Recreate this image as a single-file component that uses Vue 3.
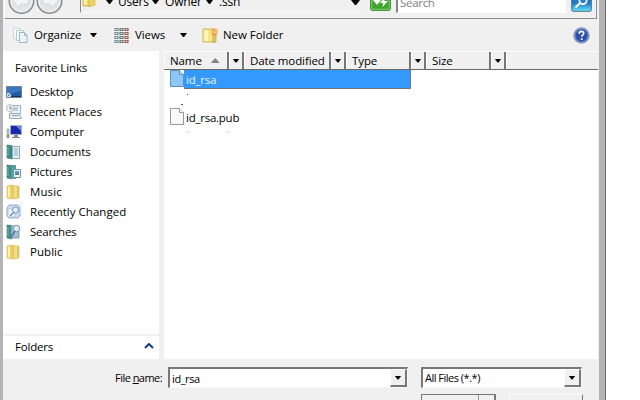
<script setup>
const links = [
  { name: 'Desktop', icon: 'desktop', track: -0.15 },
  { name: 'Recent Places', icon: 'recent', track: -0.12 },
  { name: 'Computer', icon: 'computer', track: 0 },
  { name: 'Documents', icon: 'documents', track: -0.1 },
  { name: 'Pictures', icon: 'pictures', track: -0.1 },
  { name: 'Music', icon: 'folder', track: 0.1 },
  { name: 'Recently Changed', icon: 'changed', track: 0.03 },
  { name: 'Searches', icon: 'searches', track: -0.25 },
  { name: 'Public', icon: 'folder', track: 0.05 },
]
const columns = [
  { name: 'Name', width: 65, sorted: true },
  { name: 'Date modified', width: 87 },
  { name: 'Type', width: 65 },
  { name: 'Size', width: 65 },
]
</script>

<template>
  <div class="screen">
    <div class="window">
      <header class="address">
        <div class="nav">
          <svg v-for="d in ['back', 'forward']" :key="d" width="27" height="28" viewBox="0 0 27 28">
            <circle cx="13.5" cy="14" r="12.3" fill="#d0d1d2" stroke="#8a8c8e" stroke-width="1.4" />
            <circle cx="13.5" cy="14" r="10.6" fill="#e2e3e4" stroke="#f8f8f8" />
            <path :d="d === 'back' ? 'M5 14l7-7v4h8v6h-8v4z' : 'M22 14l-7-7v4H7v6h8v4z'" fill="#f5f5f5" stroke="#d2d4d6" stroke-width=".8" />
          </svg>
        </div>
        <div class="path">
          <svg class="path-icon" width="14" height="16" viewBox="0 0 14 16">
            <path d="M1 1h8v13H1z" fill="#edd568" stroke="#c3a53d" stroke-width=".6" />
            <path d="M7 3h6v10l-6 2z" fill="#ecd45c" stroke="#c9ad46" stroke-width=".6" />
            <path d="M2 2h3v11H2z" fill="#fbf1ad" />
          </svg>
          <i class="tri t1"></i><span class="crumb c1">Users</span>
          <i class="tri t2"></i><span class="crumb c2">Owner</span>
          <i class="tri t3"></i><span class="crumb c3">.ssh</span>
          <i class="tri t4"></i>
        </div>
        <svg class="refresh" width="21" height="20" viewBox="0 0 21 20">
          <rect x=".7" y=".7" width="19.6" height="18.6" rx="1.5" fill="#3fa52c" stroke="#2e7f24" />
          <rect x="1.8" y="1.8" width="17.4" height="16.4" fill="none" stroke="#93d781" stroke-width=".8" />
          <path d="M3 9h2V6h4v3h2l-4 5zM10 12l4-6 .5 4h3.500l-5.500 6 .5-4z" fill="#fff" />
        </svg>
        <div class="search">Search</div>
        <svg class="go" width="21" height="20" viewBox="0 0 21 20">
          <defs><linearGradient id="goFill" x2="0" y2="1"><stop stop-color="#1555ac" /><stop offset=".6" stop-color="#2583cd" /><stop offset="1" stop-color="#68e5f4" /></linearGradient></defs>
          <rect x=".7" y=".7" width="19.6" height="18.6" rx="1.5" fill="url(#goFill)" stroke="#4b6f8c" />
          <circle cx="12" cy="8.5" r="3.6" fill="#2b7cca" stroke="#fff" stroke-width="1.8" />
          <path d="M9 11l-4.5 4.5" stroke="#fff" stroke-width="2" />
        </svg>
      </header>

      <nav class="toolbar">
        <svg class="i-org" width="15" height="17" viewBox="0 0 15 17">
          <path d="M.5 1.5h7v10h-7z" fill="#f7fafc" stroke="#c8d8e2" />
          <path d="M3.5 3.5h7v10h-7z" fill="#f7fafc" stroke="#b6cad8" />
          <path d="M6.500 5.500h5l2.500 2.500v7.500h-7.500z" fill="#eef5fa" stroke="#9bb5c8" />
          <path d="M11.500 5.500v3H14" fill="none" stroke="#9bb5c8" />
        </svg>
        <span class="w-org">Organize</span><i class="tri a-org"></i>
        <svg class="i-view" width="15" height="15" viewBox="0 0 15 15">
          <g v-for="r in 4" :key="r">
            <g v-for="c in 3" :key="c">
              <rect :x="(c - 1) * 5 + .5" :y="(r - 1) * 4" width="4" height="3" :fill="c === 3 ? '#8a4444' : c === 2 ? '#46665a' : '#667a86'" />
              <rect :x="(c - 1) * 5 + 1.5" :y="(r - 1) * 4 + .7" width="2" height="1.5" :fill="c === 3 ? '#f0d8d0' : '#e5f5ee'" />
            </g>
          </g>
        </svg>
        <span class="w-view">Views</span><i class="tri a-view"></i>
        <svg class="i-new" width="17" height="17" viewBox="0 0 17 17">
          <path d="M1 2h11v13H1z" fill="#f6e58a" stroke="#d3b654" />
          <path d="M11 6l3 1v8l-3 .5z" fill="#e3c85b" stroke="#b59d55" stroke-width=".7" />
          <path d="M2 3h4v11H2z" fill="#fff4b6" />
          <path d="M12.500 1v8M8.500 5h8M9.700 2.200l5.600 5.600M15.300 2.200L9.700 7.800" stroke="#ee9b32" stroke-width="1.200" />
          <circle cx="12.500" cy="5" r="1.500" fill="#fbd37a" />
        </svg>
        <span class="w-new">New Folder</span>
        <svg class="help" width="17" height="17" viewBox="0 0 17 17">
          <circle cx="8.500" cy="8.500" r="7.500" fill="#2c4fae" stroke="#8f9db9" stroke-width="1.500" />
          <circle cx="8.500" cy="8.500" r="6.300" fill="none" stroke="#5f82d2" />
          <path d="M6.200 6.800c0-3.200 4.800-3 4.500-.3-.2 1.500-2 1.500-2 3.300M8.700 11.300v1.600" fill="none" stroke="#fff" stroke-width="1.700" />
        </svg>
      </nav>

      <main class="body">
        <aside class="side">
          <div class="links">
            <h2>Favorite Links</h2>
            <div v-for="l in links" :key="l.name" class="link">
              <svg width="16" height="16" viewBox="0 0 16 16">
                <g v-if="l.icon === 'desktop'">
                  <path d="M.500 2.500h15v11H.500z" fill="#24589f" stroke="#6d8297" />
                  <path d="M1 3h14v4L1 11z" fill="#3978bf" /><path d="M1 12h14v1H1z" fill="#1b3560" />
                  <path d="M1 9h4v4H1z" fill="#bee2f1" /><path d="M2 12l3-3" stroke="#31699e" />
                </g>
                <g v-else-if="l.icon === 'recent'">
                  <path d="M5.500 1.500h9v8h-9z" fill="#e8f2f8" stroke="#9db0bc" />
                  <path d="M3.500 9.500h10l2 5h-12z" fill="#e6edf0" stroke="#9baab3" />
                  <path d="M7 4h5M7 6h5M6 11.500h7" stroke="#83abc9" /><circle cx="4" cy="4" r="3.500" fill="#f5f7f7" stroke="#b4bbbe" />
                  <path d="M4 2v2.500h2" fill="none" stroke="#71828d" />
                </g>
                <g v-else-if="l.icon === 'computer'">
                  <path d="M4.500 1.500h11v9h-11z" fill="#1828b5" stroke="#a9afb9" /><path d="M10 2h5v5z" fill="#6983e2" />
                  <path d="M8 11h4v2h2v1H6v-1h2z" fill="#7c858b" /><path d="M1 5h2v9H1z" fill="#c0cec3" stroke="#7d9180" stroke-width=".6" /><path d="M1 11h2v2H1z" fill="#5aa247" />
                </g>
                <g v-else-if="l.icon === 'folder'">
                  <path d="M1 2l6-1v14l-6-1z" fill="#edd365" stroke="#d6bd66" stroke-width=".7" />
                  <path d="M2 3l2-.4v11L2 13z" fill="#fcf2ae" />
                  <path d="M7 2h6v12l-5 1z" fill="#f3df7c" stroke="#d0b65c" stroke-width=".7" /><path d="M11 3h2v10h-2z" fill="#dfc463" />
                </g>
                <g v-else-if="l.icon === 'changed'">
                  <path d="M3 1h9l2 2v9l-2 2H3l-2-2V4z" fill="#cbdcf1" stroke="#819dc4" stroke-width=".8" />
                  <path d="M2 5h7v8H2z" fill="#eaf3fc" stroke="#9fb5d4" stroke-width=".6" />
                  <circle cx="9.500" cy="6" r="3" fill="#e4f0fc" stroke="#7693bf" /><path d="M7.500 8.500L4 12" stroke="#6683ad" stroke-width="1.300" />
                </g>
                <g v-else>
                  <path d="M1 1l5 .5V15l-5-1z" fill="#3c8c83" stroke="#4c8075" stroke-width=".7" /><path d="M2 3v9" stroke="#79b9ad" />
                  <g v-if="l.icon === 'documents'">
                    <path d="M6.500 2.500h7v12h-7z" fill="#e4f1f7" stroke="#8aa7b7" /><path d="M8 5h4M8 7h4M8 9h4M8 11h4" stroke="#739db8" stroke-width=".8" />
                  </g>
                  <g v-else-if="l.icon === 'pictures'">
                    <path d="M5 1h5v14H5z" fill="#5c9f9b" /><path d="M7.500 5.500h7v8h-7z" fill="#eaf4fa" stroke="#6e92ac" /><path d="M9 7h4v4H9z" fill="#5f9bc1" /><path d="M9 10l4-1v2H9z" fill="#48837b" />
                  </g>
                  <g v-else>
                    <path d="M5 2h8v12H5z" fill="#9dbed0" stroke="#6c91a3" stroke-width=".8" />
                    <circle cx="10.500" cy="4.500" r="3.200" fill="#dfeefa" stroke="#7791b7" /><path d="M9 7l-4 6" stroke="#526f99" stroke-width="1.500" />
                  </g>
                </g>
              </svg>
              <span :style="{ letterSpacing: l.track + 'px' }">{{ l.name }}</span>
            </div>
          </div>
          <div class="folders">
            <span>Folders</span>
            <svg width="10" height="6" viewBox="0 0 10 6"><path d="M1 5l4-4 4 4" fill="none" stroke="#153b83" stroke-width="2" /></svg>
          </div>
        </aside>

        <section class="files">
          <div class="head">
            <template v-for="c in columns" :key="c.name">
              <div class="col" :style="{ width: c.width + 'px' }">
                <span>{{ c.name }}</span><i v-if="c.sorted" class="sort"></i>
              </div>
              <div class="drop"><i class="tri"></i></div>
            </template>
            <div class="rest"></div>
          </div>
          <div class="file selected">
            <svg width="14" height="17" viewBox="0 0 14 17"><path d="M.500.500h9l4 4v12H.500z" fill="#8fc6f8" stroke="#5c91bd" /><path d="M9.500.500v4h4" fill="#c9e5fc" stroke="#5c91bd" /></svg>
            <span>id_rsa</span>
          </div>
          <div class="specks one"><i></i><i></i></div>
          <div class="file">
            <svg width="14" height="17" viewBox="0 0 14 17"><path d="M.500.500h9l4 4v12H.500z" fill="#f9f9f9" stroke="#999" /><path d="M9.500.500v4h4" fill="#fff" stroke="#999" /></svg>
            <span>id_rsa.pub</span>
          </div>
          <div class="specks two"><i></i><i></i></div>
        </section>
      </main>

      <footer class="foot">
        <div class="fields">
          <label>File <u>n</u>ame:</label>
          <div class="combo name"><span>id_rsa</span><b><i class="tri"></i></b></div>
          <div class="combo type"><span>All Files (*.*)</span><b><i class="tri"></i></b></div>
        </div>
        <div class="buttons"><div class="btn open"><span></span></div><div class="btn cancel"></div></div>
      </footer>
    </div>
  </div>
</template>

<style>
body { margin: 0; background: #fff; overflow: hidden; }
</style>

<style scoped>
* { box-sizing: border-box; }
.screen { width: 640px; height: 400px; overflow: hidden; background: #fff; font: 11.5px/16px "Open Sans", "Noto Sans", sans-serif; color: #000; }
.window { width: 606px; height: 400px; background: #f0f0f0; border-left: 3px solid #b4b4b4; border-right: 1px solid #6c6c6c; box-shadow: inset -6px 0 #b4b4b4; display: flex; flex-direction: column; overflow: hidden; }
svg { display: block; flex: none; }
.tri { display: block; flex: none; width: 7px; height: 4px; background: #000; clip-path: polygon(0 0, 100% 0, 57% 100%, 43% 100%); }
.address { height: 19px; flex: none; margin-left: 1px; width: 593px; border-left: 1px solid #fff; border-bottom: 1px solid #8b8b8b; border-right: 1px solid #8b8b8b; display: flex; align-items: flex-end; overflow: hidden; }
.nav { display: flex; gap: 1px; margin: 0 0 3px 3px; }
.path { height: 26px; margin: 0 0 5px 17px; width: 285px; border-left: 1px solid #888; border-bottom: 1px solid #fafafa; display: flex; align-items: flex-end; }
.path-icon { margin: 0 0 4px 1px; }
.path .tri { margin-bottom: 8px; }
.path .t1 { margin-left: 10px; }
.crumb { font-size: 12px; line-height: 16px; margin-bottom: 2px; flex: none; letter-spacing: -.2px; }
.c1 { margin-left: 5px; width: 34px; }
.c2 { margin-left: 6px; width: 41px; }
.c3 { margin-left: 6px; }
.path .t4 { margin-left: auto; margin-right: 5px; width: 9px; height: 5px; margin-bottom: 7px; }
.refresh { margin: 0 0 7px 5px; }
.search { margin: 0 0 5px 5px; width: 170px; height: 22px; background: #fff; border-left: 2px solid #858585; border-bottom: 1px solid #fff; padding: 4px 0 0 2px; color: #808080; line-height: 16px; font-size: 11.5px; letter-spacing: -.3px; }
.go { margin: 0 0 6px 5px; }
.toolbar { height: 32px; flex: none; display: flex; align-items: center; padding: 0 9px 0 10px; width: 596px; }
.w-org { margin-left: 6px; width: 48px; letter-spacing: -.1px; }
.a-org { margin-left: 8px; }
.i-view { margin-left: 17px; }
.w-view { margin-left: 6px; width: 31px; letter-spacing: -.1px; }
.a-view { margin-left: 14px; }
.i-new { margin-left: 15px; }
.w-new { margin-left: 4px; letter-spacing: -.05px; }
.help { margin-left: auto; }
.body { height: 308px; flex: none; width: 595px; display: flex; gap: 5px; }
.side { width: 156px; flex: none; display: flex; flex-direction: column; gap: 2px; }
.links { height: 283px; background: #fff; }
h2 { margin: 0; padding: 9px 0 6px 12px; font: inherit; letter-spacing: -.1px; }
.link { height: 20px; display: flex; align-items: center; gap: 8px; padding-left: 3px; }
.folders { height: 23px; background: #fff; display: flex; align-items: flex-start; justify-content: space-between; padding: 3px 5px 0 12px; letter-spacing: -.2px; }
.folders svg { margin-top: 4px; }
.files { flex: 1; background: #fff; min-width: 0; }
.head { height: 19px; display: flex; background: #f0f0f0; border-bottom: 1px solid #696969; border-top: 1px solid #fff; }
.col, .drop { border-right: 2px solid #777; border-left: 1px solid #fff; height: 17px; flex: none; display: flex; align-items: center; }
.col { padding-left: 5px; }
.col span { white-space: nowrap; line-height: 16px; letter-spacing: -.1px; }
.drop { width: 15px; justify-content: center; }
.rest { border-left: 1px solid #fff; }
.sort { width: 9px; height: 5px; background: #858585; clip-path: polygon(50% 0, 100% 100%, 0 100%); margin-left: 9px; }
.file { height: 19px; display: flex; padding-left: 6px; letter-spacing: -.25px; }
.file span { padding-left: 2px; line-height: 19px; height: 19px; }
.selected span { width: 227px; background: #39f; border-right: 1px solid #777; border-bottom: 1px solid #777; color: #e9f5ff; }
.specks { height: 19px; display: flex; }
.specks i { width: 1px; height: 1px; background: #555; }
.one i:first-child { margin: 15px 0 0 17px; width: 2px; }
.one i:last-child { margin: 5px 0 0 4px; }
.two i { background: #aaa; margin-top: 5px; }
.two i:first-child { margin-left: 23px; }
.two i:last-child { margin-left: 40px; }
.foot { flex: none; height: 41px; width: 596px; font-size: 11px; }
.fields { display: flex; height: 29px; padding-top: 8px; }
.foot label { width: 165px; padding: 3px 6px 0 0; text-align: right; letter-spacing: -.55px; line-height: 16px; }
.combo { height: 21px; background: #fff; border: 2px solid #777; border-right: 1px solid #f8f8f8; border-bottom: 1px solid #f8f8f8; display: flex; justify-content: space-between; }
.combo span { padding: 2px 0 0 2px; line-height: 16px; letter-spacing: -.4px; }
.combo b { width: 17px; height: 18px; background: #f0f0f0; border: 1px solid #fff; border-right: 2px solid #777; border-bottom: 2px solid #777; display: grid; place-items: center; }
.name { width: 240px; }
.type { width: 161px; margin-left: 13px; }
.type span { padding-top: 1px; letter-spacing: -.5px; }
.buttons { display: flex; padding: 6px 0 0 418px; gap: 13px; }
.btn { height: 22px; flex: none; border: 1px solid #777; }
.open { width: 75px; border-right-width: 2px; }
.open span { display: block; width: 57px; height: 22px; border-right: 1px solid #999; }
.cancel { width: 74px; border-top-color: #fff; border-left-color: #fff; }
</style>
